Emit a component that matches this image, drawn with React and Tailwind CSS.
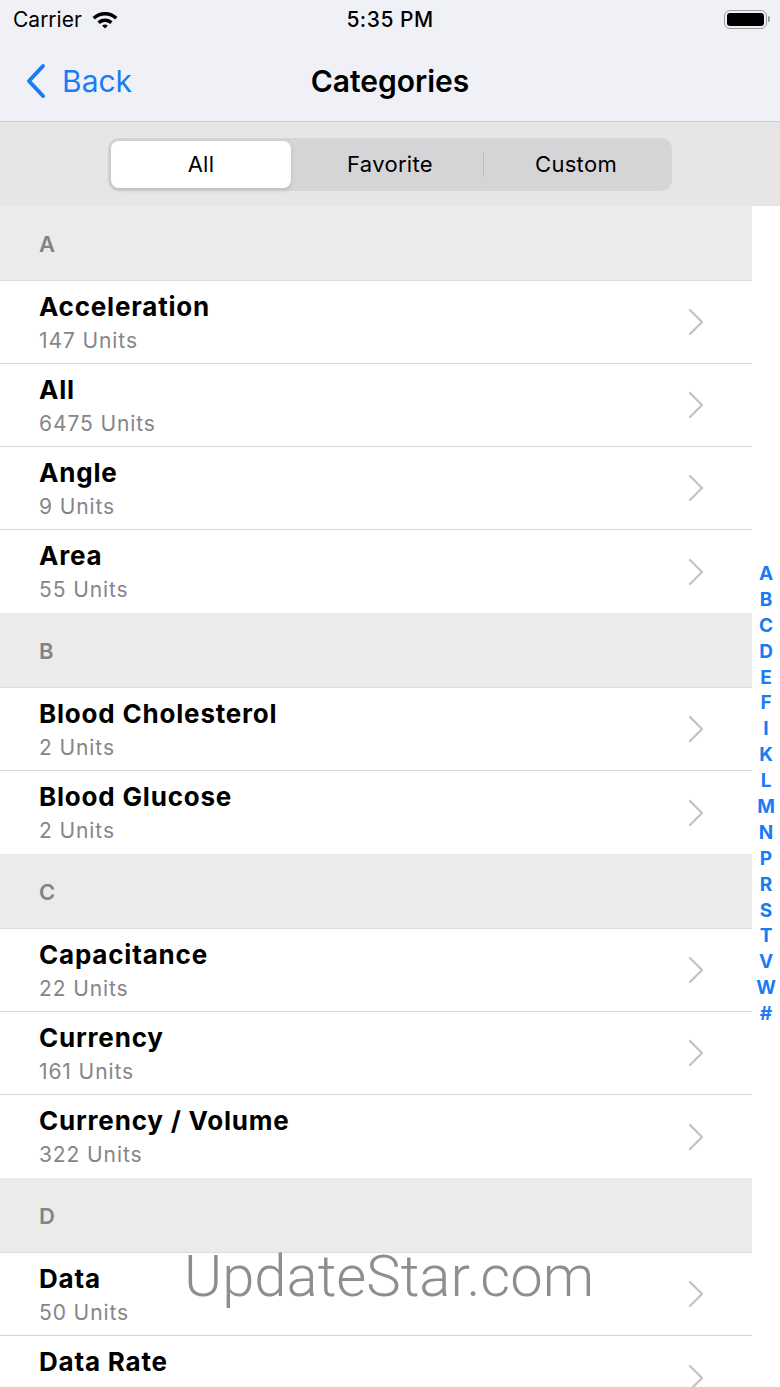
import React from "react";

const font = { fontFamily: "Inter, 'Liberation Sans', sans-serif" };

const sections = [
  { letter: "A", rows: [["Acceleration", "147 Units"], ["All", "6475 Units"], ["Angle", "9 Units"], ["Area", "55 Units"]] },
  { letter: "B", rows: [["Blood Cholesterol", "2 Units"], ["Blood Glucose", "2 Units"]] },
  { letter: "C", rows: [["Capacitance", "22 Units"], ["Currency", "161 Units"], ["Currency / Volume", "322 Units"]] },
  { letter: "D", rows: [["Data", "50 Units"], ["Data Rate", null]] },
];

const index = ["A", "B", "C", "D", "E", "F", "I", "K", "L", "M", "N", "P", "R", "S", "T", "V", "W", "#"];

function Chevron() {
  return (
    <svg width="18" height="28" viewBox="0 0 18 28" fill="none">
      <path d="M3 2 L15 14 L3 26" stroke="#c4c4c7" strokeWidth="2.4" strokeLinecap="round" strokeLinejoin="round" />
    </svg>
  );
}

function Wifi() {
  return (
    <svg width="28" height="21" viewBox="0 0 28 21">
      <path d="M14 3 C9 3 4.8 4.9 1.5 8 L4 10.6 C6.6 8.1 10.1 6.6 14 6.6 C17.9 6.6 21.4 8.1 24 10.6 L26.5 8 C23.2 4.9 19 3 14 3 Z" fill="#000" />
      <path d="M14 9.4 C11 9.4 8.4 10.5 6.4 12.4 L8.9 15 C10.3 13.7 12.1 12.9 14 12.9 C15.9 12.9 17.7 13.7 19.1 15 L21.6 12.4 C19.6 10.5 17 9.4 14 9.4 Z" fill="#000" />
      <path d="M14 15.6 C12.9 15.6 11.9 16 11.2 16.7 L14 19.6 L16.8 16.7 C16.1 16 15.1 15.6 14 15.6 Z" fill="#000" />
    </svg>
  );
}

function Battery() {
  return (
    <div className="flex items-center">
      <div className="w-[43px] h-[19px] rounded-[6px] border-[1.5px] border-[#9a9a9a] p-[2px]">
        <div className="w-full h-full rounded-[3px] bg-black" />
      </div>
      <div className="w-[2px] h-[6px] bg-[#9a9a9a] rounded-r-[2px] ml-[1px]" />
    </div>
  );
}

export default function App() {
  return (
    <div className="w-[780px] h-[1387px] overflow-hidden bg-white relative" style={font}>
      {/* status bar */}
      <div className="h-[40px] bg-[#f0f1f6] flex items-center justify-between px-[13px] relative">
        <div className="flex items-center gap-[9px] -mt-[1px]">
          <span className="text-[21px] leading-none text-black">Carrier</span>
          <Wifi />
        </div>
        <span className="absolute left-0 right-0 text-center text-[21px] font-medium tracking-[0.5px] leading-none text-black -mt-[1px]">5:35 PM</span>
        <div className="-mt-[2px] mr-[-3px]">
          <Battery />
        </div>
      </div>
      {/* nav bar */}
      <div className="h-[82px] bg-[#f0f1f6] border-b border-[#cfcfd2] flex items-center relative">
        <div className="flex items-center pl-[24px] gap-[14px]">
          <svg width="24" height="36" viewBox="0 0 24 36" fill="none">
            <path d="M19 3 L5 18 L19 33" stroke="#1a7cf3" strokeWidth="4" strokeLinecap="round" strokeLinejoin="round" />
          </svg>
          <span className="text-[30px] text-[#1a7cf3] leading-none">Back</span>
        </div>
        <span className="absolute left-0 right-0 text-center text-[30px] font-semibold text-black leading-none pointer-events-none">Categories</span>
      </div>
      {/* segmented area */}
      <div className="h-[84px] bg-[#e6e6e7] flex items-center justify-center">
        <div className="w-[564px] h-[53px] rounded-[11px] bg-[#d5d5d7] p-[3px] grid grid-cols-3">
          <div className="bg-white rounded-[8px] shadow-[0_2px_5px_rgba(0,0,0,0.12)] flex items-center justify-center text-[22px] tracking-[0.3px] text-black mr-[6px]">All</div>
          <div className="flex items-center justify-center text-[22px] tracking-[0.3px] text-black">Favorite</div>
          <div className="flex items-center justify-center text-[22px] tracking-[0.3px] text-black relative">
            <div className="absolute left-0 top-[11px] bottom-[11px] w-px bg-[#bdbdc0]" />
            Custom
          </div>
        </div>
      </div>
      {/* list */}
      <div className="flex bg-white">
        <div className="w-[752px]">
          {sections.map((s) => (
            <div key={s.letter}>
              <div className="h-[75px] bg-[#ebebec] flex items-center pl-[39px] border-b border-[#dcdcdd]">
                <span className="text-[22px] font-semibold text-[#838387] leading-none mt-[2px]">{s.letter}</span>
              </div>
              {s.rows.map(([t, u], i) => (
                <div key={t} className={"h-[83px] flex items-center pl-[39px] pr-[47px] " + (i < s.rows.length - 1 ? "border-b border-[#d5d5d7]" : "")}>
                  <div className="flex-1 flex flex-col self-start pt-[11px]">
                    <span className="text-[26px] font-bold tracking-[0.8px] text-black leading-[30px]">{t}</span>
                    {u && <span className="text-[21px] text-[#85858a] tracking-[0.9px] leading-[28px] mt-[5px]">{u}</span>}
                  </div>
                  <Chevron />
                </div>
              ))}
            </div>
          ))}
        </div>
        <div className="w-[28px] flex flex-col items-center pt-[355px]">
          {index.map((l) => (
            <span key={l} className="h-[25.9px] leading-[25.9px] text-[19px] font-bold text-[#1a7cf3]">{l}</span>
          ))}
        </div>
      </div>
      {/* watermark */}
      <div className="absolute left-[184px] top-[1247px] text-[58px] font-light leading-none text-[#8e8e8e] pointer-events-none" style={{ fontFamily: "Roboto, sans-serif" }}>
        UpdateStar.com
      </div>
    </div>
  );
}
